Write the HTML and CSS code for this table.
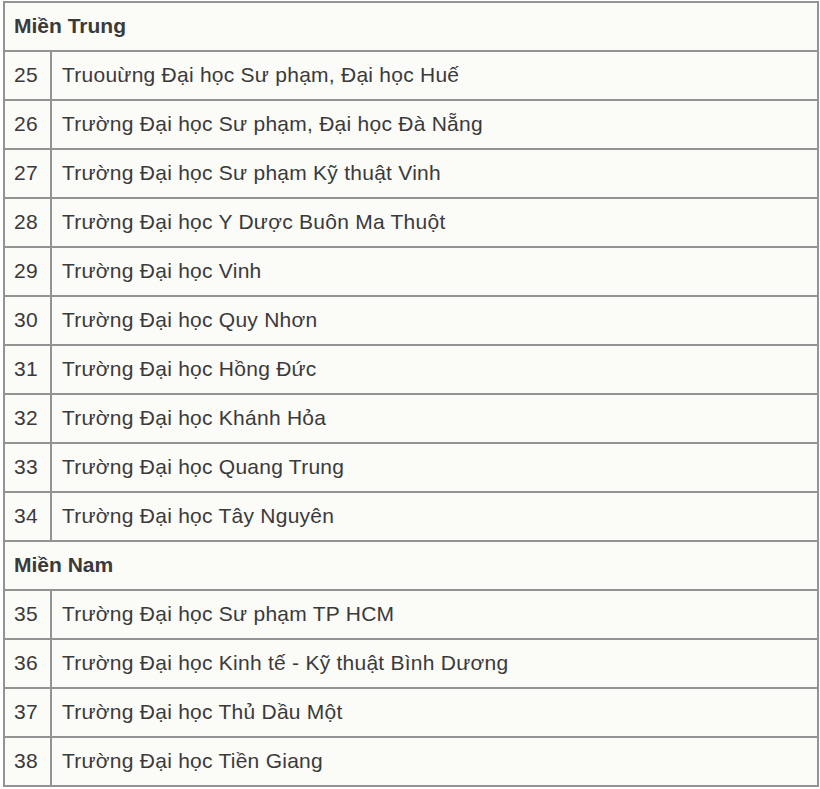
FILE: index.html
```html
<!DOCTYPE html>
<html lang="vi">
<head>
<meta charset="utf-8">
<link rel="stylesheet" href="styles.css">
</head>
<body>
<table class="list">
<tr class="region"><td colspan="2">Miền Trung</td></tr>
<tr><td class="num">25</td><td class="name">Truouừng Đại học Sư phạm, Đại học Huế</td></tr>
<tr><td class="num">26</td><td class="name">Trường Đại học Sư phạm, Đại học Đà Nẵng</td></tr>
<tr><td class="num">27</td><td class="name">Trường Đại học Sư phạm Kỹ thuật Vinh</td></tr>
<tr><td class="num">28</td><td class="name">Trường Đại học Y Dược Buôn Ma Thuột</td></tr>
<tr><td class="num">29</td><td class="name">Trường Đại học Vinh</td></tr>
<tr><td class="num">30</td><td class="name">Trường Đại học Quy Nhơn</td></tr>
<tr><td class="num">31</td><td class="name">Trường Đại học Hồng Đức</td></tr>
<tr><td class="num">32</td><td class="name">Trường Đại học Khánh Hỏa</td></tr>
<tr><td class="num">33</td><td class="name">Trường Đại học Quang Trung</td></tr>
<tr><td class="num">34</td><td class="name">Trường Đại học Tây Nguyên</td></tr>
<tr class="region"><td colspan="2">Miền Nam</td></tr>
<tr><td class="num">35</td><td class="name">Trường Đại học Sư phạm TP HCM</td></tr>
<tr><td class="num">36</td><td class="name">Trường Đại học Kinh tế - Kỹ thuật Bình Dương</td></tr>
<tr><td class="num">37</td><td class="name">Trường Đại học Thủ Dầu Một</td></tr>
<tr><td class="num">38</td><td class="name">Trường Đại học Tiền Giang</td></tr>
</table>
</body>
</html>
```
FILE: styles.css
```css
html, body {
  margin: 0;
  padding: 0;
  background: #ffffff;
}
body {
  padding: 1px 2px 0 3px;
  font-family: "Liberation Sans", Arial, sans-serif;
  font-size: 21px;
  letter-spacing: 0.25px;
  color: #3a3a3a;
}
.list {
  width: 816px;
  border-collapse: collapse;
  background: #fbfbf8;
  border: 2px solid #8e8e8e;
}
.list td {
  border: 2px solid #939393;
  height: 45px;
  padding: 0 10px 2px;
  vertical-align: middle;
  line-height: 22px;
}
.list td.num {
  width: 27px;
  padding: 0 9px 2px;
}
.region td {
  font-weight: bold;
  padding-left: 9px;
  letter-spacing: 0;
}
```
